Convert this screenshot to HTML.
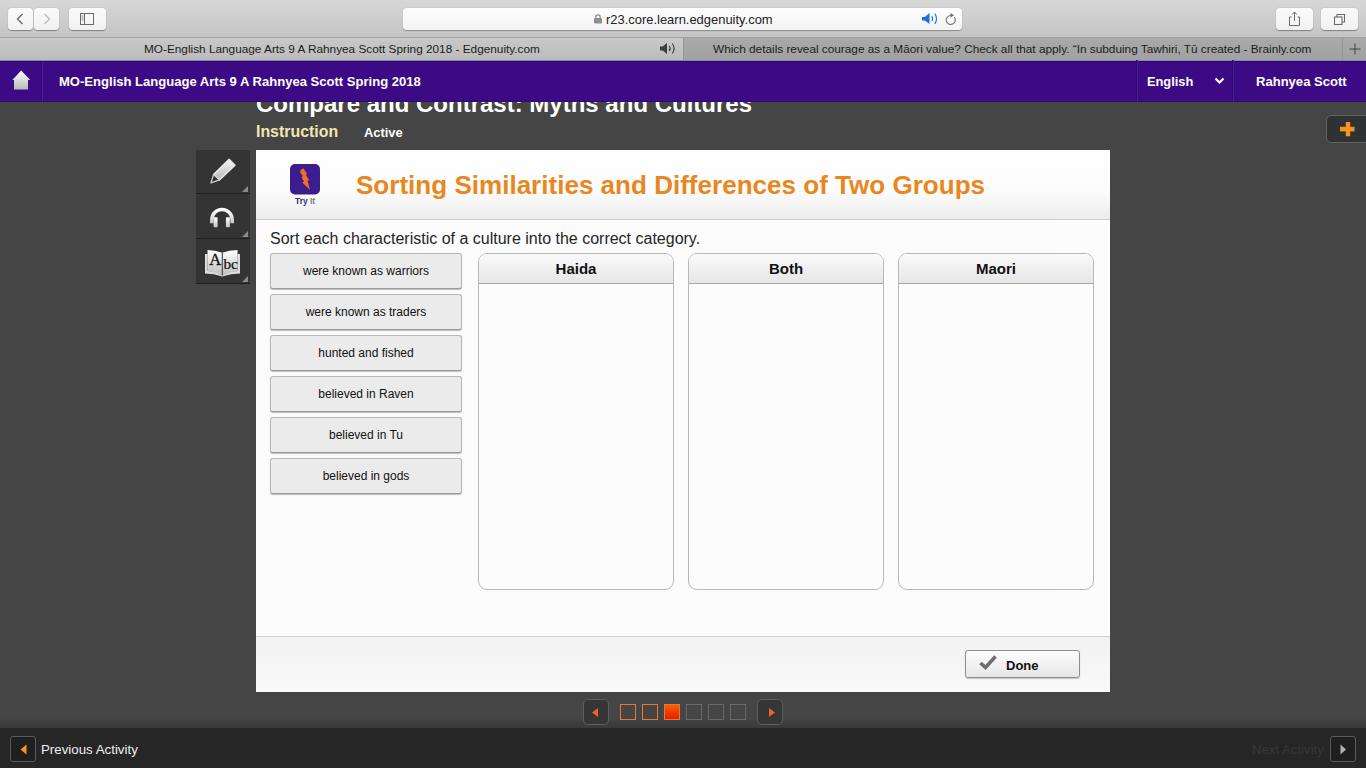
<!DOCTYPE html>
<html><head><meta charset="utf-8">
<style>
*{margin:0;padding:0;box-sizing:border-box}
html,body{width:1366px;height:768px;overflow:hidden;background:#454545;font-family:"Liberation Sans",sans-serif}
.a{position:absolute}
svg{position:absolute;overflow:visible}
#toolbar{left:0;top:0;width:1366px;height:37px;background:linear-gradient(#d7d7d7,#c4c4c4)}
.tbtn{background:linear-gradient(#fbfbfb,#f1f1f1);border-radius:4px;box-shadow:0 0.5px 1px rgba(0,0,0,0.35);height:22px;top:8px}
#addr{left:403px;top:8px;width:559px;height:22px;background:linear-gradient(#fdfdfd,#f4f4f4);border-radius:4px;box-shadow:0 0.5px 1px rgba(0,0,0,0.3)}
#addr span{position:absolute;left:203px;top:4px;font-size:12.95px;color:#222;white-space:nowrap}
#tabline{left:0;top:37px;width:1366px;height:1px;background:#a3a3a3}
#tab1{left:0;top:38px;width:683px;height:22px;background:linear-gradient(#c8c8c8,#bcbcbc)}
#tab2{left:683px;top:38px;width:659px;height:22px;background:linear-gradient(#a9a9a9,#a1a1a1);border-left:1px solid #959595}
#tab3{left:1342px;top:38px;width:24px;height:22px;background:linear-gradient(#a9a9a9,#a1a1a1);border-left:1px solid #959595}
.tabt{position:absolute;top:4px;font-size:11.8px;color:#1c1c1c;white-space:nowrap}
#nav{left:0;top:60px;width:1366px;height:42px;background:#3d0a86}
.navt{position:absolute;color:#fff;font-weight:bold;font-size:13.05px;white-space:nowrap;top:14px}
.sep{position:absolute;top:0;width:2px;height:42px;border-left:1px solid #300a72;background:#4a1f94}
#title{left:256px;top:90px;font-size:24px;font-weight:bold;color:#fff;white-space:nowrap}
#instr{left:256px;top:123px;font-size:15.9px;font-weight:bold;color:#f2e6b0;white-space:nowrap}
#active{left:364px;top:125px;font-size:12.9px;font-weight:bold;color:#fff;white-space:nowrap}
.tool{left:196px;width:54px;height:44px;background:#343434;border-bottom:1px solid #1f1f1f}
.tool:after{content:"";position:absolute;right:2px;bottom:1px;width:0;height:0;border-left:6px solid transparent;border-bottom:6px solid #8a8a8a}
#panel{left:256px;top:150px;width:854px;height:542px;background:#fbfbfb}
#phead{left:0;top:0;width:854px;height:70px;background:linear-gradient(#ffffff 0%,#fcfcfc 60%,#ececec 100%);border-bottom:1px solid #cfcfcf}
#ptitle{left:100px;top:20px;font-size:26.05px;font-weight:bold;color:#e8871f;white-space:nowrap}
#prompt{left:14px;top:80px;font-size:16px;color:#262626;white-space:nowrap}
.item{left:14px;width:192px;height:36px;background:#ebebeb;border:1px solid #b8b8b8;border-bottom-color:#9a9a9a;border-radius:3px;box-shadow:0 1px 1px rgba(0,0,0,0.25);font-size:12px;color:#111;text-align:center;line-height:34px}
.col{top:103px;width:196px;height:337px;border:1px solid #b8b8b8;border-radius:9px;background:#fcfcfc;overflow:hidden}
.colh{position:absolute;left:0;top:0;width:100%;height:30px;background:linear-gradient(#fafafa,#e6e6e6);border-bottom:1px solid #a9a9a9;font-size:15px;font-weight:bold;color:#111;text-align:center;line-height:30px}
#pfoot{left:0;top:486px;width:854px;height:56px;background:linear-gradient(#f2f2f2,#f9f9f9);border-top:1px solid #d4d4d4}
#done{left:709px;top:13px;width:115px;height:28px;background:linear-gradient(#fdfdfd,#e6e6e6);border:1px solid #8e8e8e;border-radius:3px;box-shadow:0 1px 1px rgba(0,0,0,0.2)}
#done span{position:absolute;left:40px;top:7px;font-size:13px;font-weight:bold;color:#111}
#bottom{left:0;top:728px;width:1366px;height:40px;background:#262626}
#shade{left:0;top:718px;width:1366px;height:10px;background:linear-gradient(rgba(0,0,0,0),rgba(0,0,0,0.18))}
.pbtn{top:699px;width:26px;height:26px;border:1px solid #5e5e5e;border-radius:5px;background:#363636}
.sq{top:704px;width:16px;height:16px;border:1px solid #6a6a6a}
.sq.o{border-color:#e7792c}
#prev{left:10px;top:736px;width:26px;height:26px;border:1px solid #5c5c5c;border-radius:3px;background:#1f1f1f}
#next{left:1330px;top:736px;width:26px;height:26px;border:1px solid #5c5c5c;border-radius:3px;background:#1f1f1f}
#plus{left:1326px;top:115px;width:45px;height:28px;border:1px solid #5e6366;border-radius:5px;background:#2f3133}
</style></head><body>
<div id="toolbar" class="a">
  <div class="a tbtn" style="left:8px;width:25px"><svg width="25" height="22"><path d="M14.5 6 L9.5 11 L14.5 16" fill="none" stroke="#6b6b6b" stroke-width="1.4"/></svg></div>
  <div class="a tbtn" style="left:34px;width:25px"><svg width="25" height="22"><path d="M10.5 6 L15.5 11 L10.5 16" fill="none" stroke="#bdbdbd" stroke-width="1.4"/></svg></div>
  <div class="a tbtn" style="left:69px;width:37px"><svg width="37" height="22"><rect x="11.5" y="5.5" width="13" height="11" fill="none" stroke="#6b6b6b" stroke-width="1"/><line x1="15.5" y1="5.5" x2="15.5" y2="16.5" stroke="#6b6b6b"/><line x1="12.5" y1="8" x2="14.5" y2="8" stroke="#8a8a8a"/><line x1="12.5" y1="10" x2="14.5" y2="10" stroke="#8a8a8a"/><line x1="12.5" y1="12" x2="14.5" y2="12" stroke="#8a8a8a"/></svg></div>
  <div id="addr" class="a"><svg width="10" height="10" style="left:191px;top:6px"><rect x="0" y="4" width="8" height="5.5" rx="1" fill="#8e8e8e"/><path d="M1.8 4.5 V3 A2.2 2.2 0 0 1 6.2 3 V4.5" fill="none" stroke="#8e8e8e" stroke-width="1.3"/></svg><span>r23.core.learn.edgenuity.com</span>
    <svg width="16" height="12" style="left:519px;top:5px"><path d="M0 4 H2.8 L7.5 0 V11 L2.8 7.5 H0 Z" fill="#1a6fe0"/><path d="M9.8 3.2 Q11.5 5.7 9.8 8.2" fill="none" stroke="#1a6fe0" stroke-width="1.1"/><path d="M12.8 0.5 Q16.2 5.7 12.8 11" fill="none" stroke="#1a6fe0" stroke-width="1.1"/></svg>
    <svg width="14" height="14" style="left:541px;top:4px"><path d="M10.3 5.2 A4.5 4.5 0 1 1 7 3.5" fill="none" stroke="#707070" stroke-width="1.1"/><path d="M6.5 1 L10 3.3 L6.5 5.8 Z" fill="#707070"/></svg>
  </div>
  <div class="a tbtn" style="left:1276px;width:37px"><svg width="37" height="22"><path d="M15.5 9 H13.5 V17.5 H23.5 V9 H21.5" fill="none" stroke="#6b6b6b" stroke-width="1"/><line x1="18.5" y1="4" x2="18.5" y2="13" stroke="#6b6b6b"/><path d="M16 6.5 L18.5 4 L21 6.5" fill="none" stroke="#6b6b6b"/></svg></div>
  <div class="a tbtn" style="left:1321px;width:37px"><svg width="37" height="22"><rect x="13.5" y="9" width="7.5" height="7.5" fill="none" stroke="#6b6b6b" stroke-width="1.1"/><path d="M16 9 V6.5 H23.5 V14 H21" fill="none" stroke="#6b6b6b" stroke-width="1.1"/></svg></div>
</div>
<div id="tabline" class="a"></div>
<div id="tab1" class="a"><span class="tabt" style="left:144px">MO-English Language Arts 9 A Rahnyea Scott Spring 2018 - Edgenuity.com</span>
  <svg width="16" height="12" style="left:660px;top:5px"><path d="M0 3.5 H2.8 L7 0 V11 L2.8 7.5 H0 Z" fill="#3d3d3d"/><path d="M9.3 3 Q11 5.5 9.3 8" fill="none" stroke="#3d3d3d" stroke-width="1.1"/><path d="M12.3 0.5 Q15.8 5.5 12.3 10.5" fill="none" stroke="#3d3d3d" stroke-width="1.1"/></svg>
</div>
<div id="tab2" class="a"><span class="tabt" style="left:29px">Which details reveal courage as a Māori value? Check all that apply. “In subduing Tawhiri, Tū created - Brainly.com</span></div>
<div id="tab3" class="a"><svg width="24" height="22"><line x1="6.5" y1="11" x2="17.5" y2="11" stroke="#444" stroke-width="1"/><line x1="12" y1="5.5" x2="12" y2="16.5" stroke="#444" stroke-width="1"/></svg></div>
<div id="title" class="a">Compare and Contrast: Myths and Cultures</div>
<div id="nav" class="a">
  <div class="sep" style="left:41px"></div><div class="a" style="left:0;top:0;width:1366px;height:1px;background:#8f80ad"></div><div class="a" style="left:0;top:1px;width:1366px;height:1px;background:#2e0a68"></div><div class="a" style="left:0;top:41px;width:1366px;height:1px;background:#33086f"></div>
  <svg width="20" height="20" style="left:12px;top:10px"><defs><linearGradient id="hg" x1="0" y1="0" x2="0" y2="1"><stop offset="0" stop-color="#ffffff"/><stop offset="1" stop-color="#b9b9b9"/></linearGradient></defs><path d="M0.3 10 L9.2 0.6 L18.2 10 H16 V19.4 H2 V10 Z" fill="url(#hg)"/></svg>
  <span class="navt" style="left:59px">MO-English Language Arts 9 A Rahnyea Scott Spring 2018</span>
  <div class="sep" style="left:1136px"></div>
  <span class="navt" style="left:1147px;font-size:12.8px">English</span>
  <svg width="12" height="8" style="left:1214px;top:17px"><path d="M1.5 1.5 L5.5 5.5 L9.5 1.5" fill="none" stroke="#fff" stroke-width="2.2"/></svg>
  <div class="sep" style="left:1232px"></div>
  <span class="navt" style="left:1256px">Rahnyea Scott</span>
</div>
<div id="instr" class="a">Instruction</div>
<div id="active" class="a">Active</div>
<div class="a tool" style="top:150px"><svg width="54" height="43"><defs><linearGradient id="pg" x1="0" y1="0" x2="0" y2="1"><stop offset="0" stop-color="#fafafa"/><stop offset="1" stop-color="#b5b5b5"/></linearGradient></defs>
  <path d="M33.1 9.4 L39 15.2 L23.4 29.9 L17.6 24.6 Z" fill="url(#pg)" stroke="#e8e8e8" stroke-width="1.5" stroke-linejoin="round"/>
  <path d="M17.6 24.6 L23.4 29.9 L15 32.8 Z" fill="#2e2e2e" stroke="#d0d0d0" stroke-width="1.3" stroke-linejoin="round"/></svg></div>
<div class="a tool" style="top:194px;height:45px"><svg width="54" height="43"><defs><linearGradient id="hpg" x1="0" y1="0" x2="0" y2="1"><stop offset="0" stop-color="#ffffff"/><stop offset="1" stop-color="#c5c5c5"/></linearGradient></defs>
  <g transform="translate(-0.4,1.2)"><path d="M16.2 28 V24.5 A10.2 10.2 0 0 1 36.6 24.5 V28" fill="none" stroke="url(#hpg)" stroke-width="3.6"/>
  <rect x="18" y="22" width="4" height="10" rx="0.8" fill="url(#hpg)"/><rect x="30.3" y="22" width="4" height="10" rx="0.8" fill="url(#hpg)"/></g></svg></div>
<div class="a tool" style="top:239px;height:45px"><svg width="54" height="43"><defs><linearGradient id="bg" x1="0" y1="0" x2="0" y2="1"><stop offset="0" stop-color="#ffffff"/><stop offset="1" stop-color="#bdbdbd"/></linearGradient></defs>
  <g transform="translate(0,1)"><path d="M9 14 H11.5 V31 Q19 31 26.3 35 Q33 31 41.5 31 V14 H44 V33.5 Q35 33.5 26.3 36.5 Q18 33.5 9 33.5 Z" fill="#dcdcdc"/>
  <path d="M11.5 10 Q19 10 26.3 12.8 Q33 10 41.5 10 V31.5 Q33 31.5 26.3 35.8 Q19 31.5 11.5 31.5 Z" fill="url(#bg)"/>
  <line x1="26.3" y1="13" x2="26.3" y2="35.5" stroke="#222" stroke-width="0.9"/>
  <text x="13.2" y="25" font-family="Liberation Serif" font-size="16.5" fill="#111" stroke="#111" stroke-width="0.3">A</text>
  <text x="27.5" y="28.7" font-family="Liberation Serif" font-size="15.2" fill="#111" stroke="#111" stroke-width="0.2">bc</text></g></svg></div>
<div id="plus" class="a"><svg width="20" height="20" style="left:13px;top:6px"><rect x="5.8" y="0" width="4.4" height="14.3" fill="#f7931e"/><rect x="0" y="4.8" width="14.5" height="4.6" fill="#f7931e"/></svg></div>
<div id="panel" class="a">
  <div id="phead" class="a">
    <svg width="30" height="31" style="left:34px;top:14px"><rect x="0" y="0" width="30" height="30.5" rx="5" fill="#3b1d8e"/><path d="M10.1 6.4 L13.3 4.3 L17.2 10 L15.8 10.7 L19 16.1 L17.6 17.1 L20.1 26.1 L12.2 18.6 L14 17.5 L11.5 13.2 L12.9 12.1 L10.4 8.9 Z" fill="#f26b2a"/></svg>
    <div class="a" style="left:39px;top:46px;font-size:8.4px;font-weight:bold;white-space:nowrap"><span style="color:#3a2c78">Try</span> <span style="color:#7a7a7a">It</span></div>
    <div id="ptitle" class="a">Sorting Similarities and Differences of Two Groups</div>
  </div>
  <div id="prompt" class="a">Sort each characteristic of a culture into the correct category.</div>
  <div class="a" style="left:799px;top:71px;width:55px;height:415px;background:rgba(255,255,255,0.4)"></div>
  <div class="a item" style="top:103px">were known as warriors</div>
  <div class="a item" style="top:144px">were known as traders</div>
  <div class="a item" style="top:185px">hunted and fished</div>
  <div class="a item" style="top:226px">believed in Raven</div>
  <div class="a item" style="top:267px">believed in Tu</div>
  <div class="a item" style="top:308px">believed in gods</div>
  <div class="a col" style="left:222px"><div class="colh">Haida</div></div>
  <div class="a col" style="left:432px"><div class="colh">Both</div></div>
  <div class="a col" style="left:642px"><div class="colh">Maori</div></div>
  <div id="pfoot" class="a"><div id="done" class="a"><svg width="20" height="17" style="left:13px;top:3px"><path d="M1.5 9 L6.5 13.5 L16.5 2.5" fill="none" stroke="#6f6f6f" stroke-width="3.6" stroke-linejoin="miter"/></svg><span>Done</span></div></div>
</div>
<div id="shade" class="a"></div><div id="bottom" class="a"></div>
<div class="a pbtn" style="left:583px"><svg width="25" height="25"><path d="M8 12.5 L14 8 V17 Z" fill="#e8642a"/></svg></div>
<div class="a sq o" style="left:620px"></div>
<div class="a sq o" style="left:642px"></div>
<div class="a sq o" style="left:664px;background:linear-gradient(#ff5a00,#e02000)"></div>
<div class="a sq" style="left:686px"></div>
<div class="a sq" style="left:708px"></div>
<div class="a sq" style="left:730px"></div>
<div class="a pbtn" style="left:757px"><svg width="25" height="25"><path d="M17 12.5 L11 8 V17 Z" fill="#e8642a"/></svg></div>
<div id="prev" class="a"><svg width="26" height="26"><path d="M9.5 12.5 L15.5 7.5 V17.5 Z" fill="#f7931e"/></svg></div>
<span class="a" style="left:41px;top:742px;font-size:13.3px;color:#eee">Previous Activity</span>
<span class="a" style="left:1252px;top:742px;font-size:13.2px;color:#363636">Next Activity</span>
<div id="next" class="a"><svg width="26" height="26"><path d="M15 12.5 L9.5 7.5 V17.5 Z" fill="#b0b0b0"/></svg></div>
</body></html>
